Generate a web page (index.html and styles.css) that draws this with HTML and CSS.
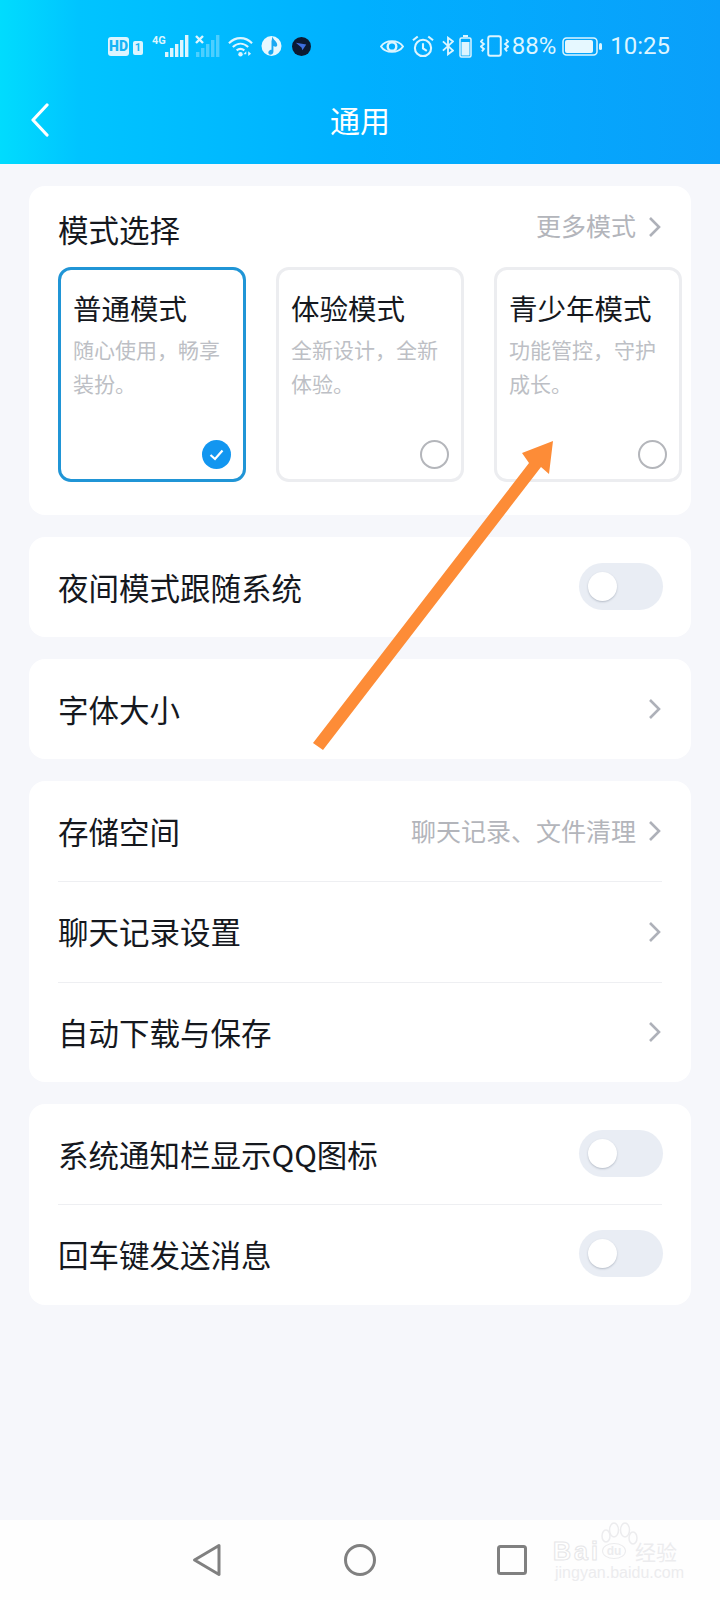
FILE: index.html
```html
<!DOCTYPE html>
<html lang="zh-CN">

<head>
    <meta charset="UTF-8">
    <meta name="viewport" content="width=device-width, initial-scale=1.0">
    <title>通用</title>
    <link rel="stylesheet" href="styles.css">
</head>

<body>
    <header class="header">
        <div class="statusBar">
            <div class="statusGroup">
                <span class="hdBadge">HD</span>
                <span class="simBadge">1</span>
                <span class="netType">4G</span>
                <svg class="signal" width="24" height="22" viewBox="0 0 24 22">
                    <rect x="0" y="17" width="3.400" height="5" fill="#dcf5ff" />
                    <rect x="5" y="13" width="3.400" height="9" fill="#dcf5ff" />
                    <rect x="10" y="9" width="3.400" height="13" fill="#dcf5ff" />
                    <rect x="15" y="5" width="3.400" height="17" fill="#dcf5ff" />
                    <rect x="20" y="0" width="3.400" height="22" fill="#dcf5ff" />
                </svg>
                <svg class="signalOff" width="25" height="22" viewBox="0 0 25 22">
                    <path d="M1 1l7 7M8 1l-7 7" stroke="#dcf5ff" stroke-width="2.400" fill="none" />
                    <g fill="#dcf5ff" opacity="0.35">
                        <rect x="1" y="17" width="3.400" height="5" />
                        <rect x="6" y="13" width="3.400" height="9" />
                        <rect x="11" y="9" width="3.400" height="13" />
                        <rect x="16" y="5" width="3.400" height="17" />
                        <rect x="21" y="0" width="3.400" height="22" />
                    </g>
                </svg>
                <svg class="wifi" width="25" height="21" viewBox="0 0 26 21">
                    <g fill="none" stroke="#dcf5ff" stroke-width="2.200">
                        <path d="M1 7c7-7 17-7 24 0" />
                        <path d="M5 11c5-4.500 11-4.500 16 0" />
                        <path d="M9 14.500c2.500-2 5.500-2 8 0" />
                    </g>
                    <circle cx="13" cy="18.500" r="2.300" fill="#dcf5ff" />
                    <path d="M19 15.500l-3 3h3zM21 15.500l3 2.500-3 2.500z" fill="#dcf5ff" />
                </svg>
                <svg width="21" height="22" viewBox="0 0 22 22">
                    <circle cx="11" cy="11" r="10.500" fill="#e6f8ff" />
                    <path d="M12 1c1 4 5 5 5 9 0 2-2 2-4 1v6c0 3-4 4-5 2s1-4 3-4V6z" fill="#1aa9f3" />
                </svg>
                <svg class="birdIcon" width="19" height="19" viewBox="0 0 20 20">
                    <circle cx="10" cy="10" r="10" fill="#0c1a33" />
                    <path d="M4 6l11 2-4 6-1-3z" fill="#3f6fe0" />
                </svg>
            </div>
            <div class="statusGroup">
                <svg width="24" height="17" viewBox="0 0 25 17">
                    <path d="M1 8.500C6 1 19 1 24 8.500 19 16 6 16 1 8.500z" fill="none" stroke="#dcf5ff" stroke-width="2" />
                    <circle cx="12.500" cy="8.500" r="4.500" fill="none" stroke="#dcf5ff" stroke-width="2.500" />
                </svg>
                <svg width="22" height="23" viewBox="0 0 23 23">
                    <circle cx="11.500" cy="13" r="8.500" fill="none" stroke="#dcf5ff" stroke-width="2.200" />
                    <path d="M11.500 8v5.500l4 2.500M1 5l5-4M22 5l-5-4" fill="none" stroke="#dcf5ff" stroke-width="2.200" />
                </svg>
                <svg width="12" height="20" viewBox="0 0 13 20">
                    <path d="M1 5l11 10-5.500 4V1L12 5 1 15" fill="none" stroke="#dcf5ff" stroke-width="2" />
                </svg>
                <svg class="tightLeft" width="13" height="23" viewBox="0 0 13 23">
                    <rect x="4" y="0" width="5" height="2" fill="#dcf5ff" />
                    <rect x="1" y="3" width="11" height="19" rx="1.500" fill="none" stroke="#dcf5ff" stroke-width="1.500" />
                    <rect x="2.500" y="7" width="8" height="13.500" fill="#dcf5ff" />
                </svg>
                <svg width="29" height="22" viewBox="0 0 30 22">
                    <rect x="8.500" y="1" width="13" height="20" rx="2" fill="none" stroke="#dcf5ff" stroke-width="2" />
                    <path d="M3 4l-2 2.500 3 2.500-3 2.500 3 2.500-2 2.500M27 4l2 2.500-3 2.500 3 2.500-3 2.500 2 2.500" fill="none" stroke="#dcf5ff" stroke-width="2" />
                </svg>
                <span class="statusText statusPercent">88%</span>
                <svg class="mainBattery" width="40" height="19" viewBox="0 0 40 19">
                    <rect x="1" y="1" width="34" height="17" rx="3.500" fill="none" stroke="#dcf5ff" stroke-width="1.500" />
                    <rect x="3" y="3" width="28" height="13" rx="2" fill="#e6f8ff" />
                    <rect x="37" y="6" width="3" height="7" rx="1.500" fill="#dcf5ff" />
                </svg>
                <span class="statusText">10:25</span>
            </div>
        </div>
        <div class="titleBar">
            <svg class="backIcon" width="20" height="34" viewBox="0 0 20 34">
                <path d="M17 2L3 17l14 15" fill="none" stroke="#fff" stroke-width="3.200" stroke-linecap="round" stroke-linejoin="round" />
            </svg>
            <h1 class="pageTitle">通用</h1>
            <span></span>
        </div>
    </header>

    <main class="content">
        <section class="card modeCard">
            <div class="modeHeader">
                <span class="rowLabel">模式选择</span>
                <span class="rowExtra"><span class="extraText">更多模式</span>
                    <svg class="chevron" width="14" height="22" viewBox="0 0 14 22">
                        <path d="M2 2l9 9-9 9" fill="none" stroke="#aeb1b9" stroke-width="2.600" />
                    </svg>
                </span>
            </div>
            <div class="modeList">
                <div class="modeBox modeBoxActive">
                    <p class="modeName">普通模式</p>
                    <p class="modeDesc">随心使用，畅享装扮。</p>
                    <svg class="modeCheck" width="29" height="29" viewBox="0 0 29 29">
                        <circle cx="14.500" cy="14.500" r="14.500" fill="#1296f0" />
                        <path d="M8.500 15l4.500 4 7.500-8.500" fill="none" stroke="#fff" stroke-width="2.200" />
                    </svg>
                </div>
                <div class="modeBox">
                    <p class="modeName">体验模式</p>
                    <p class="modeDesc">全新设计，全新体验。</p>
                    <span class="modeRadio"></span>
                </div>
                <div class="modeBox">
                    <p class="modeName">青少年模式</p>
                    <p class="modeDesc">功能管控，守护成长。</p>
                    <span class="modeRadio"></span>
                </div>
            </div>
        </section>

        <section class="card">
            <div class="row">
                <span class="rowLabel">夜间模式跟随系统</span>
                <span class="toggle"><span class="toggleKnob"></span></span>
            </div>
        </section>

        <section class="card">
            <div class="row">
                <span class="rowLabel">字体大小</span>
                <svg class="chevron" width="14" height="22" viewBox="0 0 14 22">
                    <path d="M2 2l9 9-9 9" fill="none" stroke="#aeb1b9" stroke-width="2.600" />
                </svg>
            </div>
        </section>

        <section class="card">
            <div class="row">
                <span class="rowLabel">存储空间</span>
                <span class="rowExtra"><span class="extraText">聊天记录、文件清理</span>
                    <svg class="chevron" width="14" height="22" viewBox="0 0 14 22">
                        <path d="M2 2l9 9-9 9" fill="none" stroke="#aeb1b9" stroke-width="2.600" />
                    </svg>
                </span>
            </div>
            <div class="row rowDivided">
                <span class="rowLabel">聊天记录设置</span>
                <svg class="chevron" width="14" height="22" viewBox="0 0 14 22">
                    <path d="M2 2l9 9-9 9" fill="none" stroke="#aeb1b9" stroke-width="2.600" />
                </svg>
            </div>
            <div class="row rowDivided">
                <span class="rowLabel">自动下载与保存</span>
                <svg class="chevron" width="14" height="22" viewBox="0 0 14 22">
                    <path d="M2 2l9 9-9 9" fill="none" stroke="#aeb1b9" stroke-width="2.600" />
                </svg>
            </div>
        </section>

        <section class="card">
            <div class="row">
                <span class="rowLabel">系统通知栏显示QQ图标</span>
                <span class="toggle"><span class="toggleKnob"></span></span>
            </div>
            <div class="row rowDivided">
                <span class="rowLabel">回车键发送消息</span>
                <span class="toggle"><span class="toggleKnob"></span></span>
            </div>
        </section>
    </main>

    <nav class="navBar">
        <svg width="30" height="34" viewBox="0 0 30 34">
            <path d="M27 2.500L2.500 17 27 31.500z" fill="none" stroke="#808080" stroke-width="3" stroke-linejoin="round" />
        </svg>
        <svg width="32" height="32" viewBox="0 0 32 32">
            <circle cx="16" cy="16" r="14.500" fill="none" stroke="#808080" stroke-width="3" />
        </svg>
        <svg width="30" height="30" viewBox="0 0 30 30">
            <rect x="1.500" y="1.500" width="27" height="27" rx="2" fill="none" stroke="#808080" stroke-width="3" />
        </svg>
    </nav>

    <!-- annotation drawn on top of the screenshot -->
    <svg class="arrow" width="720" height="1600" viewBox="0 0 720 1600">
        <path d="M313 743L529 463 522 453 553 441 549 474 541 467 323 750z" fill="#fd8c37" />
    </svg>

    <div class="watermark">
        <svg class="wmPaw" width="40" height="28" viewBox="0 0 40 28">
            <g fill="none" stroke="#ececee" stroke-width="1.500">
                <ellipse cx="5" cy="14" rx="4" ry="6" />
                <ellipse cx="13" cy="8" rx="4.500" ry="7" />
                <ellipse cx="24" cy="8" rx="4.500" ry="7" />
                <ellipse cx="32" cy="16" rx="4" ry="6" />
            </g>
        </svg>
        <div class="wmMain">
            <span class="wmBai">Bai</span>
            <span class="wmDu">du</span>
            <span class="wmCn">经验</span>
        </div>
        <div class="wmUrl">jingyan.baidu.com</div>
    </div>
</body>

</html>
```

FILE: styles.css
```css
html {
    margin: 0;
    background-color: #f6f7fb;
}

body {
    margin: 0;
    width: 720px;
    height: 1600px;
    display: flex;
    flex-direction: column;
    position: relative;
    overflow: hidden;
    font-family: "Noto Sans CJK SC", "Noto Sans", sans-serif;
    color: #15181e;
}

.header {
    height: 164px;
    padding-bottom: 16px;
    box-sizing: border-box;
    background: linear-gradient(90deg, #00dcfe, #00c4ff 11%, #00b0ff 50%, #0a9ffa);
}

.statusBar {
    height: 92px;
    padding: 0 50px 0 108px;
    box-sizing: border-box;
    display: flex;
    justify-content: space-between;
    align-items: center;
}

.statusGroup {
    display: flex;
    align-items: center;
    gap: 8px;
}

.statusText {
    font-family: Roboto, sans-serif;
    font-size: 24px;
    line-height: 24px;
    color: #dcf5ff;
}

.statusPercent {
    margin-left: -5px;
}

.tightLeft {
    margin-left: -3px;
}

.mainBattery {
    margin-left: -2px;
}

.birdIcon {
    margin-left: 2px;
}

.hdBadge {
    width: 21px;
    height: 19px;
    border-radius: 3px;
    background-color: #dcf5ff;
    color: #16b4f6;
    font-family: Roboto, sans-serif;
    font-size: 14px;
    font-weight: 900;
    line-height: 19px;
    text-align: center;
}

.simBadge {
    width: 10px;
    height: 14px;
    margin: 4px 0 0 -4px;
    border-radius: 2px;
    background-color: #dcf5ff;
    color: #16b4f6;
    font-family: Roboto, sans-serif;
    font-size: 11px;
    font-weight: 700;
    line-height: 14px;
    text-align: center;
}

.netType {
    width: 12px;
    height: 22px;
    margin-left: 1px;
    margin-right: -8px;
    color: #dcf5ff;
    font-family: Roboto, sans-serif;
    font-size: 11px;
    font-weight: 700;
    line-height: 12px;
}

.signal {
    margin-left: 1px;
}

.signalOff {
    margin-left: -2px;
}

.titleBar {
    height: 56px;
    padding: 0 30px;
    display: grid;
    grid-template-columns: 1fr auto 1fr;
    align-items: center;
}

.pageTitle {
    margin: 0 0 2px;
    font-size: 30px;
    font-weight: 400;
    line-height: 54px;
    color: #fff;
}

.content {
    flex: 1;
    padding: 22px 29px 0;
    display: flex;
    flex-direction: column;
    gap: 22px;
}

.card {
    background-color: #fff;
    border-radius: 16px;
}

.modeCard {
    height: 329px;
    padding-left: 29px;
    box-sizing: border-box;
}

.modeHeader {
    height: 81px;
    padding-right: 29px;
    display: flex;
    justify-content: space-between;
    align-items: center;
}

.modeHeader .rowLabel {
    margin: 4px 0 0;
}

.modeList {
    margin-left: -0.5px;
    display: flex;
    gap: 29.500px;
}

.modeBox {
    width: 188.500px;
    height: 215px;
    padding: 18px 12.500px 10px;
    box-sizing: border-box;
    display: flex;
    flex-direction: column;
    border: 3px solid #ecedf0;
    border-radius: 13px;
}

.modeBoxActive {
    border-color: #2095d6;
}

.modeName {
    margin: 0;
    font-size: 28.500px;
    line-height: 40px;
}

.modeDesc {
    margin: 4px 0 0;
    font-size: 21px;
    line-height: 34px;
    color: #bdbfc5;
}

.modeCheck,
.modeRadio {
    margin-top: auto;
    align-self: flex-end;
    flex-shrink: 0;
}

.modeRadio {
    width: 29px;
    height: 29px;
    box-sizing: border-box;
    border: 2px solid #b4b6bb;
    border-radius: 50%;
}

.row {
    height: 100px;
    margin: 0 29px;
    display: flex;
    justify-content: space-between;
    align-items: center;
}

.rowDivided {
    height: 100.500px;
    border-top: 1px solid #eeeff2;
    box-sizing: border-box;
}

.rowLabel {
    margin-bottom: 1px;
    font-size: 30.500px;
    line-height: 40px;
}

.rowExtra {
    display: flex;
    align-items: center;
    gap: 12px;
    font-size: 25px;
    color: #b3b5bb;
}

.extraText {
    margin-bottom: 3px;
}

.chevron {
    flex-shrink: 0;
}

.toggle {
    width: 84px;
    height: 47px;
    margin: 0 -1px 2px 0;
    padding-left: 9px;
    box-sizing: border-box;
    display: flex;
    align-items: center;
    border-radius: 24px;
    background-color: #e9edf4;
}

.toggleKnob {
    width: 29px;
    height: 29px;
    border-radius: 50%;
    background-color: #fff;
    box-shadow: 0 1px 2px rgba(90, 100, 120, 0.35);
}

.navBar {
    height: 80px;
    padding: 0 193px 0 192px;
    box-sizing: border-box;
    display: flex;
    justify-content: space-between;
    align-items: center;
    background-color: #fefefe;
}

.arrow {
    position: absolute;
    left: 0;
    top: 0;
    pointer-events: none;
}

.watermark {
    position: absolute;
    left: 553px;
    top: 1522px;
    width: 130px;
    color: #ececee;
    font-family: "Liberation Sans", sans-serif;
}

.wmPaw {
    position: absolute;
    left: 48px;
    top: 0;
}

.wmMain {
    margin-top: 16px;
    display: flex;
    align-items: center;
    line-height: 26px;
    white-space: nowrap;
}

.wmBai {
    width: 49px;
    font-size: 25px;
    font-weight: 700;
    letter-spacing: 3px;
    color: #fff;
    -webkit-text-stroke: 1px #e6e6e8;
}

.wmDu {
    width: 24px;
    height: 16px;
    box-sizing: border-box;
    border: 1px solid #ececee;
    border-radius: 50%;
    font-size: 12px;
    font-weight: 700;
    line-height: 14px;
    text-align: center;
}

.wmCn {
    margin-left: 9px;
    font-family: "Noto Sans CJK SC", sans-serif;
    font-size: 21px;
}

.wmUrl {
    margin: 0 0 0 2px;
    font-size: 16px;
    line-height: 18px;
    white-space: nowrap;
}
```
